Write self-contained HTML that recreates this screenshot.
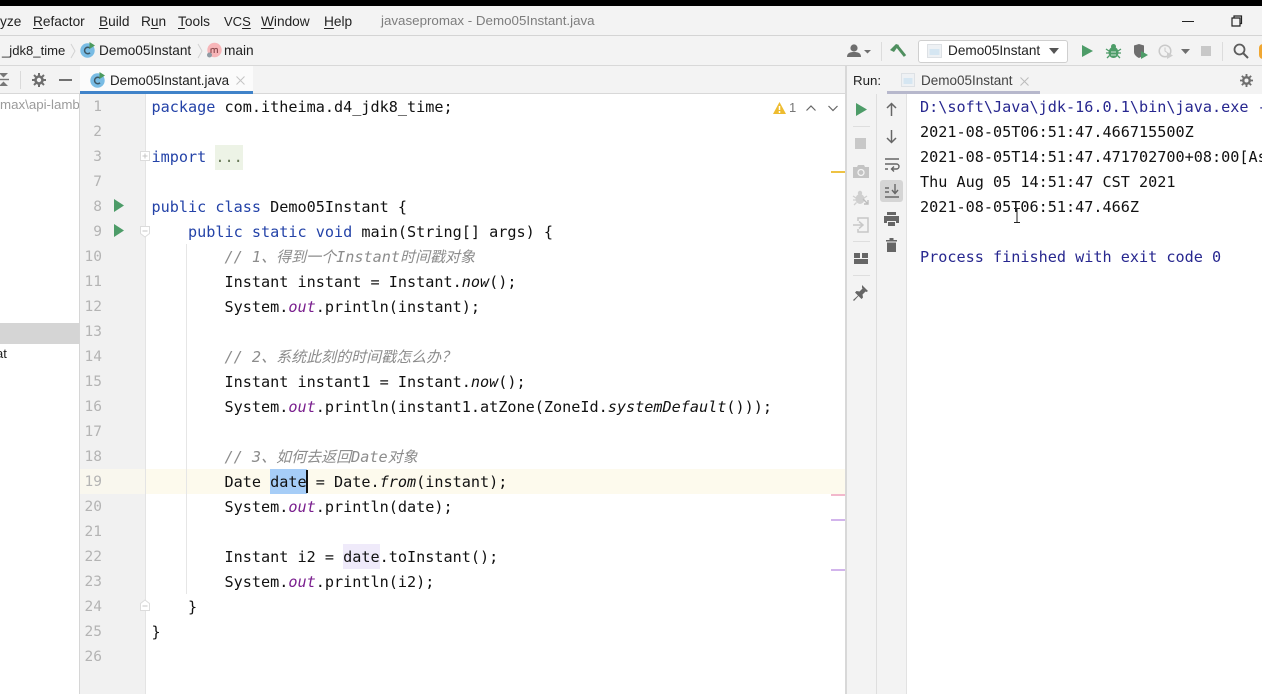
<!DOCTYPE html>
<html><head><meta charset="utf-8">
<style>
html,body{margin:0;padding:0}
body{width:1262px;height:694px;overflow:hidden;position:relative;background:#fff;font-family:"Liberation Sans","Noto Sans CJK SC",sans-serif;color:#222}
#w{position:absolute;left:0;top:0;width:1262px;height:694px;overflow:hidden;filter:blur(.35px)}
.a{position:absolute}
.m{position:absolute;white-space:pre;font-family:"DejaVu Sans Mono","Noto Sans CJK SC",monospace;font-size:15.17px;line-height:25px;height:25px;color:#111}
.k{color:#2443a8}.c{color:#8c8c8c;font-style:italic}.p{color:#7a1f8e;font-style:italic}.i{font-style:italic}
.z{font-size:15px}
.n{position:absolute;left:80px;width:22px;text-align:right;font-family:"DejaVu Sans Mono",monospace;font-size:14.5px;line-height:25px;color:#b4b4b4}
.u{position:absolute;white-space:pre;font-size:13.7px;line-height:18px;color:#222}
.u u{text-decoration-thickness:1px;text-underline-offset:2px}
svg{position:absolute;overflow:visible}
</style></head><body><div id="w">
<div class="a" style="left:0;top:0;width:1262px;height:6px;background:#000"></div>
<div class="a" style="left:0;top:6px;width:1262px;height:29px;background:#f3f3f3"></div>
<div class="a" style="left:0;top:35px;width:1262px;height:1px;background:#d4d4d4"></div>
<div class="a" style="left:0;top:36px;width:1262px;height:29px;background:#f3f3f3"></div>
<div class="a" style="left:0;top:65px;width:1262px;height:1px;background:#d8d8d8"></div>
<div class="a" style="left:0;top:66px;width:846px;height:28px;background:#f3f3f3"></div>
<div class="a" style="left:846px;top:66px;width:416px;height:28px;background:#f3f3f3"></div>
<div class="a" style="left:0;top:93px;width:80px;height:1px;background:#d8d8d8"></div>

<!-- menu -->
<div class="u" style="left:0;top:13px">yze</div>
<div class="u" style="left:33px;top:13px"><u>R</u>efactor</div>
<div class="u" style="left:99px;top:13px"><u>B</u>uild</div>
<div class="u" style="left:141px;top:13px">R<u>u</u>n</div>
<div class="u" style="left:178px;top:13px"><u>T</u>ools</div>
<div class="u" style="left:224px;top:13px;font-size:13px">VC<u>S</u></div>
<div class="u" style="left:261px;top:13px"><u>W</u>indow</div>
<div class="u" style="left:324px;top:13px"><u>H</u>elp</div>
<div class="u" style="left:381px;top:12px;color:#7d7d7d;font-size:13.35px">javasepromax - Demo05Instant.java</div>
<div class="a" style="left:1182px;top:21px;width:12px;height:1px;background:#222"></div>
<svg style="left:1231px;top:15px" width="12" height="12" viewBox="0 0 12 12"><path d="M3 2.500V1h7.500v7.500H9M1 3h8v8H1z" fill="none" stroke="#222" stroke-width="1.2"/></svg>

<!-- breadcrumb -->
<div class="u" style="left:2px;top:42px;font-size:13.1px">_jdk8_time</div>
<svg style="left:70px;top:43px" width="6" height="16"><path d="M1 1l4 7-4 7" fill="none" stroke="#d2d2d2"/></svg>
<svg style="left:80px;top:42px" width="16" height="16"><circle cx="7.500" cy="8.500" r="7.200" fill="#79bce4"/><path d="M10 6.200a3.200 3.200 0 100 4.600" fill="none" stroke="#3d5663" stroke-width="1.500"/><path d="M9.500 0l5.500 3.500-5.500 3.500z" fill="#4c9a5f"/></svg>
<div class="u" style="left:99px;top:42px;font-size:13.6px">Demo05Instant</div>
<svg style="left:197px;top:43px" width="6" height="16"><path d="M1 1l4 7-4 7" fill="none" stroke="#d2d2d2"/></svg>
<svg style="left:206px;top:42px" width="16" height="16"><circle cx="8.500" cy="8" r="7.200" fill="#f7b5b8"/><path d="M5 11V6.500M5 7.500c1-1.500 3-1.500 3.200 0V11M8.200 7.500c1-1.500 3-1.500 3.200 0V11" fill="none" stroke="#8c4a4e" stroke-width="1.100"/><circle cx="3.500" cy="13" r="2.500" fill="#8f9aa3"/></svg>
<div class="u" style="left:224px;top:42px">main</div>

<!-- toolbar right -->
<svg style="left:846px;top:43px" width="28" height="16" viewBox="0 0 28 16"><circle cx="8" cy="5" r="3.600" fill="#6e6e6e"/><path d="M1 14c0-4 3-5 7-5s7 1 7 5z" fill="#6e6e6e"/><path d="M18 7h7l-3.500 3.500z" fill="#6e6e6e"/></svg>
<div class="a" style="left:881px;top:42px;width:1px;height:19px;background:#dcdcdc"></div>
<svg style="left:890px;top:43px" width="16" height="16" viewBox="0 0 16 16"><path d="M7 3L15 13" stroke="#4f8f5f" stroke-width="3" fill="none"/><path d="M0 7L6 1l3 1-5 7z" fill="#4f8f5f"/></svg>
<div class="a" style="left:918px;top:40px;width:148px;height:21px;border:1px solid #cfcfcf;border-radius:3px;background:#fff"></div>
<svg style="left:927px;top:44px" width="15" height="14"><rect x=".5" y=".5" width="14" height="13" fill="#eef1f4" stroke="#dde1e5"/><rect x="2.500" y="5" width="10" height="6" fill="#d5e6f2"/></svg>
<div class="u" style="left:948px;top:42px;font-size:13.6px">Demo05Instant</div>
<svg style="left:1048px;top:47px" width="12" height="8"><path d="M1 1h10L6 7z" fill="#555"/></svg>
<svg style="left:1081px;top:44px" width="13" height="14"><path d="M1 1l11 6-11 6z" fill="#4d9c68"/></svg>
<svg style="left:1106px;top:43px" width="15" height="16" viewBox="0 0 15 16"><ellipse cx="7.500" cy="9.500" rx="5" ry="5.500" fill="#4d9c68"/><circle cx="7.500" cy="3.500" r="2.500" fill="#4d9c68"/><path d="M0 6l3 2M15 6l-3 2M0 10h3M15 10h-3M1 15l2.500-2.500M14 15l-2.500-2.500" stroke="#4d9c68" stroke-width="1.300"/><path d="M5 9h5M5 12h5" stroke="#cfe4d6"/></svg>
<svg style="left:1133px;top:44px" width="17" height="16" viewBox="0 0 17 16"><path d="M1 1.500L6 0l5 1.500V8c0 3-3 5-5 6-2-1-5-3-5-6z" fill="#6e6e6e"/><path d="M8 7l7 4-7 4z" fill="#4d9c68"/></svg>
<svg style="left:1158px;top:44px" width="17" height="16" viewBox="0 0 17 16"><circle cx="7" cy="7" r="5.800" fill="none" stroke="#c9c9c9" stroke-width="1.500"/><path d="M7 3.500V7l2 1.500" stroke="#c9c9c9" fill="none"/><path d="M9 8l6 3.500L9 15z" fill="#cdcdcd"/></svg>
<svg style="left:1181px;top:49px" width="9" height="6"><path d="M0 0h9L4.500 5z" fill="#6e6e6e"/></svg>
<div class="a" style="left:1201px;top:46px;width:10px;height:10px;background:#c8c8c8"></div>
<div class="a" style="left:1222px;top:42px;width:1px;height:19px;background:#dcdcdc"></div>
<svg style="left:1233px;top:43px" width="16" height="16"><circle cx="6.500" cy="6.500" r="5" fill="none" stroke="#5c5c5c" stroke-width="1.800"/><path d="M10 10l5 5" stroke="#5c5c5c" stroke-width="2"/></svg>
<div class="a" style="left:1259px;top:44px;width:8px;height:15px;border-radius:8px;background:#f0a732"></div>

<!-- project panel tools -->
<svg style="left:0;top:72px" width="10" height="16"><path d="M0 7.500h9" stroke="#777" stroke-width="1.400"/><path d="M0 1h9L4.500 5.500zM0 14h9L4.500 9.500z" fill="#777" transform="translate(-1 0)"/></svg>
<div class="a" style="left:20px;top:71px;width:1px;height:18px;background:#dadada"></div>
<svg style="left:32px;top:73px" width="14" height="14" viewBox="0 0 14 14"><circle cx="7" cy="7" r="3.500" fill="none" stroke="#6e6e6e" stroke-width="2.600"/><path d="M7 0v2.500M7 11.500V14M0 7h2.500M11.500 7H14M2 2l1.800 1.800M10.200 10.200L12 12M12 2l-1.800 1.800M3.800 10.200L2 12" stroke="#6e6e6e" stroke-width="2"/></svg>
<div class="a" style="left:59px;top:79px;width:13px;height:2px;background:#707070"></div>
<div class="u" style="left:0;top:96px;color:#9b9b9b;font-size:13.3px;width:79px;overflow:hidden">max\api-lamb</div>
<div class="a" style="left:0;top:323px;width:79px;height:21px;background:#d5d5d5"></div>
<div class="u" style="left:-4px;top:345px;color:#222;font-size:13px">at</div>

<!-- editor tab -->
<div class="a" style="left:80px;top:66px;width:173px;height:25px;background:#fbfbfb"></div>
<div class="a" style="left:80px;top:91px;width:173px;height:3px;background:#4083c9"></div>
<div class="a" style="left:253px;top:93px;width:593px;height:1px;background:#d8d8d8"></div>
<svg style="left:90px;top:72px" width="16" height="16"><circle cx="7.500" cy="8.500" r="7.200" fill="#79bce4"/><path d="M10 6.200a3.200 3.200 0 100 4.600" fill="none" stroke="#3d5663" stroke-width="1.500"/><path d="M9.500 0l5.500 3.500-5.500 3.500z" fill="#4c9a5f"/></svg>
<div class="u" style="left:110px;top:72px;font-size:13.4px">Demo05Instant.java</div>
<svg style="left:236px;top:76px" width="9" height="9"><path d="M.5.500l8 8M8.500.500l-8 8" stroke="#c4c4c4"/></svg>

<!-- gutter -->
<div class="a" style="left:79px;top:94px;width:1px;height:600px;background:#d6d6d6"></div>
<div class="a" style="left:80px;top:94px;width:65px;height:600px;background:#f1f1f1"></div>
<div class="a" style="left:145px;top:94px;width:1px;height:600px;background:#e4e4e4"></div>
<div class="a" style="left:80px;top:469px;width:65px;height:25px;background:#f9f7ee"></div>
<div class="a" style="left:146px;top:469px;width:699px;height:25px;background:#fdfaed"></div>
<div class="a" style="left:186px;top:244px;width:1px;height:350px;background:#e6e6e6"></div>

<div class="n" style="top:95px">1</div><div class="n" style="top:120px">2</div><div class="n" style="top:145px">3</div><div class="n" style="top:170px">7</div><div class="n" style="top:195px">8</div><div class="n" style="top:220px">9</div><div class="n" style="top:245px">10</div><div class="n" style="top:270px">11</div><div class="n" style="top:295px">12</div><div class="n" style="top:320px">13</div><div class="n" style="top:345px">14</div><div class="n" style="top:370px">15</div><div class="n" style="top:395px">16</div><div class="n" style="top:420px">17</div><div class="n" style="top:445px">18</div><div class="n" style="top:470px">19</div><div class="n" style="top:495px">20</div><div class="n" style="top:520px">21</div><div class="n" style="top:545px">22</div><div class="n" style="top:570px">23</div><div class="n" style="top:595px">24</div><div class="n" style="top:620px">25</div><div class="n" style="top:645px">26</div>

<svg style="left:114px;top:199px" width="10" height="13"><path d="M0 0l10 6.500L0 13z" fill="#4d9c68"/></svg>
<svg style="left:114px;top:224px" width="10" height="13"><path d="M0 0l10 6.500L0 13z" fill="#4d9c68"/></svg>
<svg style="left:140px;top:151px" width="10" height="11"><rect x=".5" y=".5" width="9" height="9" fill="#fff" stroke="#dcdcdc"/><path d="M2.500 5h5M5 2.500v5" stroke="#c4c4c4"/></svg>
<svg style="left:140px;top:226px" width="10" height="12"><path d="M.5.500h9v7L5 11 .5 7.500z" fill="#fff" stroke="#dcdcdc"/><path d="M2.500 5h5" stroke="#c4c4c4"/></svg>
<svg style="left:140px;top:599px" width="10" height="12"><path d="M.5 11.500h9v-7L5 1 .5 4.500z" fill="#fff" stroke="#dcdcdc"/><path d="M2.500 7h5" stroke="#c4c4c4"/></svg>

<!-- code -->
<div class="a" style="left:215px;top:145px;width:28px;height:25px;background:#edf3e6"></div>
<div class="a" style="left:270px;top:469px;width:37px;height:25px;background:#a6cdf7"></div>
<div class="a" style="left:306px;top:470px;width:2px;height:23px;background:#111"></div>
<div class="a" style="left:343px;top:544px;width:37px;height:25px;background:#efeafa"></div>

<div class="m" style="left:151.5px;top:95px"><span class="k">package</span> com.itheima.d4_jdk8_time;</div>
<div class="m" style="left:151.5px;top:145px"><span class="k">import</span> <span style="color:#6a7a5a">...</span></div>
<div class="m" style="left:151.5px;top:195px"><span class="k">public class</span> Demo05Instant {</div>
<div class="m" style="left:151.5px;top:220px">    <span class="k">public static void</span> main(String[] args) {</div>
<div class="m c" style="left:224.5px;top:245px;color:#8c8c8c">// 1、<span class="z">得到一个</span>Instant<span class="z">时间戳对象</span></div>
<div class="m" style="left:224.5px;top:270px">Instant instant = Instant.<span class="i">now</span>();</div>
<div class="m" style="left:224.5px;top:295px">System.<span class="p">out</span>.println(instant);</div>
<div class="m c" style="left:224.5px;top:345px;color:#8c8c8c">// 2、<span class="z">系统此刻的时间戳怎么办？</span></div>
<div class="m" style="left:224.5px;top:370px">Instant instant1 = Instant.<span class="i">now</span>();</div>
<div class="m" style="left:224.5px;top:395px">System.<span class="p">out</span>.println(instant1.atZone(ZoneId.<span class="i">systemDefault</span>()));</div>
<div class="m c" style="left:224.5px;top:445px;color:#8c8c8c">// 3、<span class="z">如何去返回</span>Date<span class="z">对象</span></div>
<div class="m" style="left:224.5px;top:470px">Date date = Date.<span class="i">from</span>(instant);</div>
<div class="m" style="left:224.5px;top:495px">System.<span class="p">out</span>.println(date);</div>
<div class="m" style="left:224.5px;top:545px">Instant i2 = date.toInstant();</div>
<div class="m" style="left:224.5px;top:570px">System.<span class="p">out</span>.println(i2);</div>
<div class="m" style="left:188px;top:595px">}</div>
<div class="m" style="left:151.5px;top:620px">}</div>

<!-- inspection -->
<svg style="left:773px;top:102px" width="13" height="12"><path d="M6.500 0L13 12H0z" fill="#eebc30"/><path d="M6.500 4v4M6.500 9v2" stroke="#fff" stroke-width="1.500"/></svg>
<div class="u" style="left:789px;top:99px;color:#777;font-size:13px">1</div>
<svg style="left:806px;top:105px" width="10" height="7"><path d="M.5 5.500L5 1l4.500 4.500" fill="none" stroke="#666" stroke-width="1.200"/></svg>
<svg style="left:828px;top:105px" width="10" height="7"><path d="M.5 1L5 5.500 9.500 1" fill="none" stroke="#666" stroke-width="1.200"/></svg>
<div class="a" style="left:831px;top:171px;width:14px;height:2px;background:#eec243"></div>
<div class="a" style="left:831px;top:494px;width:14px;height:2px;background:#f2b8cc"></div>
<div class="a" style="left:831px;top:519px;width:14px;height:2px;background:#d2b4ec"></div>
<div class="a" style="left:831px;top:569px;width:14px;height:2px;background:#d2b4ec"></div>

<!-- run panel -->
<div class="a" style="left:845px;top:66px;width:2px;height:628px;background:#d8d8d8"></div>
<div class="u" style="left:853px;top:72px;font-size:13.3px">Run:</div>
<svg style="left:901px;top:73px" width="14" height="14"><rect x=".5" y=".5" width="13" height="13" fill="#eef1f4" stroke="#dde1e5"/><rect x="2.500" y="5" width="9" height="6" fill="#d5e6f2"/></svg>
<div class="u" style="left:921px;top:72px;color:#444;font-size:13.5px">Demo05Instant</div>
<svg style="left:1020px;top:77px" width="9" height="9"><path d="M.5.500l8 8M8.500.500l-8 8" stroke="#bbb"/></svg>
<div class="a" style="left:887px;top:91px;width:153px;height:3px;background:#b7b8cc"></div>
<svg style="left:1240px;top:74px" width="13" height="13" viewBox="0 0 14 14"><circle cx="7" cy="7" r="3.500" fill="none" stroke="#6e6e6e" stroke-width="2.600"/><path d="M7 0v2.500M7 11.500V14M0 7h2.500M11.500 7H14M2 2l1.800 1.800M10.200 10.200L12 12M12 2l-1.800 1.800M3.800 10.200L2 12" stroke="#6e6e6e" stroke-width="2"/></svg>

<div class="a" style="left:847px;top:94px;width:29px;height:600px;background:#f3f3f3"></div>
<div class="a" style="left:876px;top:94px;width:1px;height:600px;background:#dedede"></div>
<div class="a" style="left:877px;top:94px;width:29px;height:600px;background:#f3f3f3"></div>
<div class="a" style="left:906px;top:94px;width:1px;height:600px;background:#e2e2e2"></div>

<svg style="left:856px;top:103px" width="11" height="13"><path d="M0 0l11 6.500L0 13z" fill="#4d9c68"/></svg>
<div class="a" style="left:853px;top:126px;width:17px;height:1px;background:#dedede"></div>
<div class="a" style="left:855px;top:138px;width:11px;height:11px;background:#c8c8c8"></div>
<svg style="left:853px;top:164px" width="16" height="14"><path d="M0 3h4l1-2h6l1 2h4v11H0z" fill="#c4c4c4"/><circle cx="8" cy="8.500" r="3" fill="none" stroke="#f3f3f3" stroke-width="1.300"/></svg>
<svg style="left:853px;top:190px" width="16" height="16"><ellipse cx="7" cy="9" rx="4.500" ry="5" fill="#cfcfcf"/><circle cx="7" cy="3" r="2.200" fill="#cfcfcf"/><path d="M0 6l3 2M14 6l-3 2M0 10h3M1 15l2.500-2.500" stroke="#cfcfcf" stroke-width="1.300"/><path d="M10 9l5 5M15 10v4h-4" fill="none" stroke="#bdbdbd" stroke-width="1.400"/></svg>
<svg style="left:853px;top:217px" width="16" height="16"><path d="M5 4V1h10v14H5v-3" fill="none" stroke="#c8c8c8" stroke-width="1.500"/><path d="M0 8h9M6 4.500L10 8l-4 3.500" fill="none" stroke="#c8c8c8" stroke-width="1.500"/></svg>
<div class="a" style="left:853px;top:241px;width:17px;height:1px;background:#dedede"></div>
<svg style="left:854px;top:253px" width="14" height="11"><path d="M0 0h6v5H0zM8 0h6v5H8zM0 6h14v5H0z" fill="#666"/></svg>
<div class="a" style="left:853px;top:275px;width:17px;height:1px;background:#dedede"></div>
<svg style="left:853px;top:285px" width="15" height="16"><path d="M9 0l6 6-1.500 1-1-.5-3 3 .5 3-1.500 1.500-3-3-4.500 5L0 15l5-4.500-3-3L3.500 6l3 .5 3-3-.5-1z" fill="#666"/></svg>

<svg style="left:886px;top:102px" width="11" height="14"><path d="M5.500 14V1.500M1 6l4.500-4.500L10 6" fill="none" stroke="#666" stroke-width="1.500"/></svg>
<svg style="left:886px;top:130px" width="11" height="14"><path d="M5.500 0v12.500M1 8l4.500 4.500L10 8" fill="none" stroke="#666" stroke-width="1.500"/></svg>
<svg style="left:885px;top:158px" width="14" height="13"><path d="M0 1h14M0 6h11.500a2.500 2.500 0 010 5H7M9 8.500L6.500 11 9 13.500M0 11h3" fill="none" stroke="#666" stroke-width="1.400"/></svg>
<div class="a" style="left:880px;top:180px;width:23px;height:22px;background:#d5d5d5;border-radius:3px"></div>
<svg style="left:885px;top:184px" width="14" height="14"><path d="M0 13h14M0 4h4M0 8h4M10 0v9M7 6l3 3.500L13 6" fill="none" stroke="#666" stroke-width="1.400"/></svg>
<svg style="left:884px;top:212px" width="15" height="14"><path d="M3 0h9v3H3zM0 4h15v7h-3V9H3v2H0zM4 10h7v4H4z" fill="#666"/></svg>
<svg style="left:886px;top:238px" width="11" height="14"><path d="M0 2h11v1.500H0zM3.500 0h4v2h-4zM1 4.500h9V14H1z" fill="#666"/></svg>

<!-- console -->
<div class="m" style="left:920px;top:95px;color:#27278f;width:342px;overflow:hidden">D:\soft\Java\jdk-16.0.1\bin\java.exe -</div>
<div class="m" style="left:920px;top:120px">2021-08-05T06:51:47.466715500Z</div>
<div class="m" style="left:920px;top:145px;width:342px;overflow:hidden">2021-08-05T14:51:47.471702700+08:00[As</div>
<div class="m" style="left:920px;top:170px">Thu Aug 05 14:51:47 CST 2021</div>
<div class="m" style="left:920px;top:195px">2021-08-05T06:51:47.466Z</div>
<div class="m" style="left:920px;top:245px;color:#27278f">Process finished with exit code 0</div>
<svg style="left:1013px;top:208px" width="8" height="15"><path d="M1 .5h6M4 .5v14M1 14.500h6" fill="none" stroke="#222"/></svg>
</div></body></html>
